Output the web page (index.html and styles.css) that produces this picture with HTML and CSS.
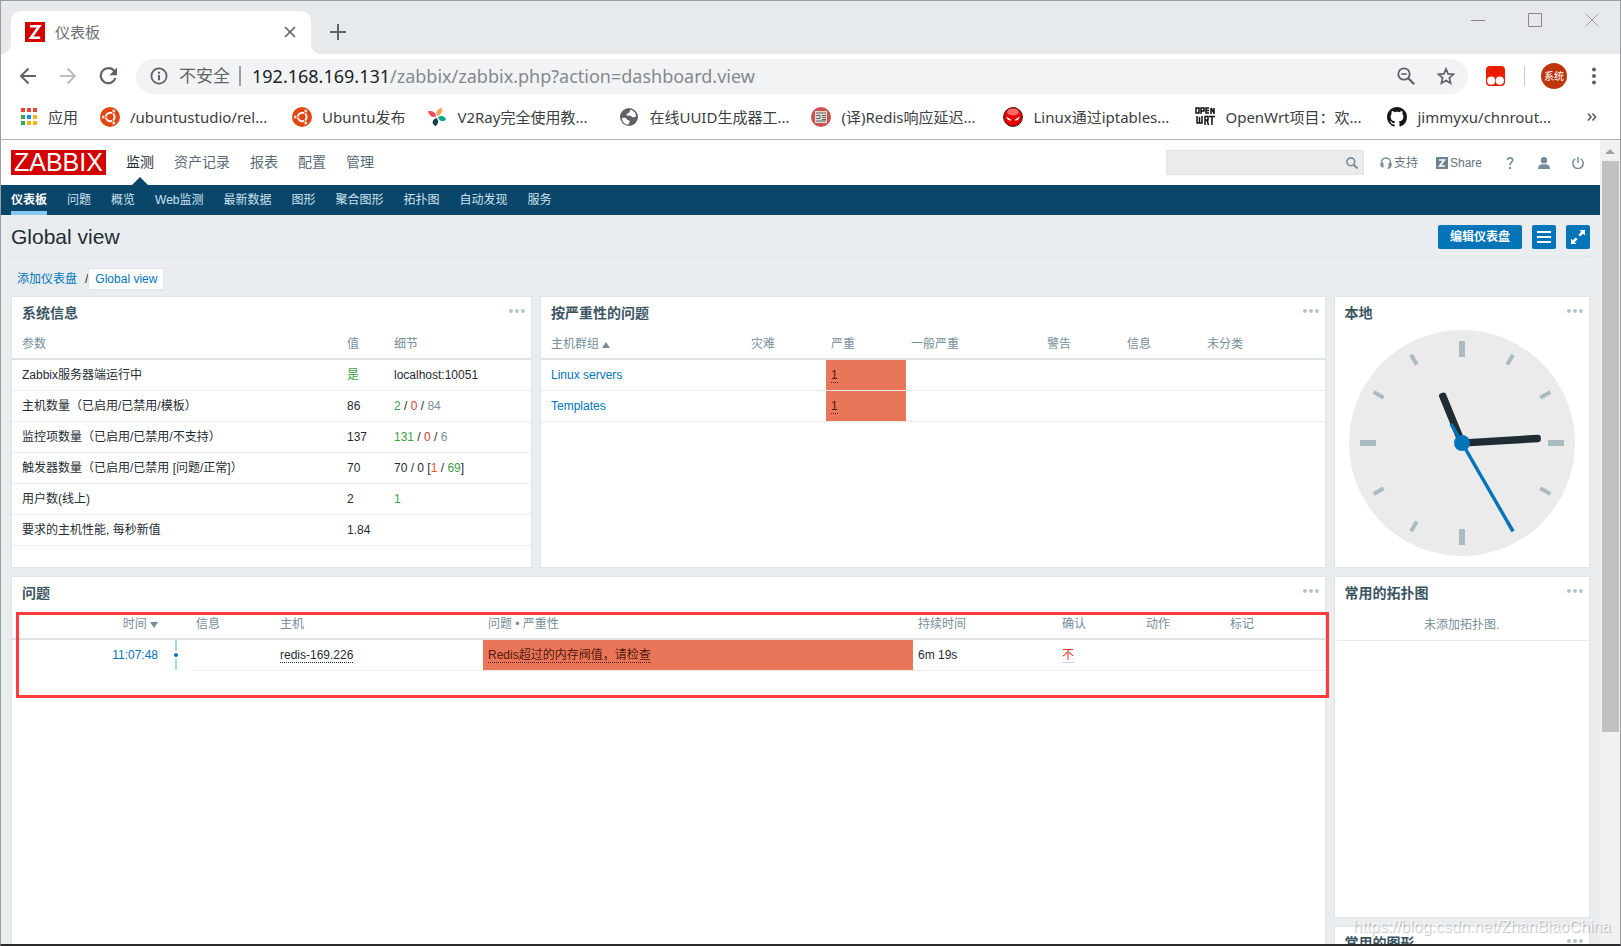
FILE: index.html
```html
<!DOCTYPE html>
<html lang="zh-CN">
<head>
<meta charset="utf-8">
<title>仪表板</title>
<link rel="stylesheet" href="styles.css">
</head>
<body>
<svg class="defs" aria-hidden="true">
  <symbol id="ubuntu" viewBox="0 0 20 20">
    <circle cx="10" cy="10" r="10" fill="#dd4814"/>
    <circle cx="10.300" cy="10" r="4.300" fill="none" stroke="#fff" stroke-width="2"/>
    <g stroke="#dd4814" stroke-width="1"><path d="M10.300 10H3M10.300 10L14 3.600M10.300 10L14 16.400"/></g>
    <circle cx="10.300" cy="10" r="2.600" fill="#dd4814"/>
    <g fill="#fff" stroke="#dd4814" stroke-width=".7"><circle cx="3.400" cy="10" r="1.700"/><circle cx="13.700" cy="4" r="1.700"/><circle cx="13.700" cy="16" r="1.700"/></g>
  </symbol>
  <symbol id="dots" viewBox="0 0 16 4"><circle cx="2" cy="2" r="2"/><circle cx="8" cy="2" r="2"/><circle cx="14" cy="2" r="2"/></symbol>
</svg>
<div class="window">
  <header class="tabstrip">
    <div class="tab">
      <svg class="i20" viewBox="0 0 20 20"><path fill="#d40000" d="M0 0h20v20H0z"/><path fill="none" stroke="#fff" stroke-width="2.600" d="M5 4.300h9.200L6 15.700h9.200"/></svg>
      <span class="tab-title">仪表板</span>
      <button class="plain" aria-label="关闭标签页"><svg class="i12" viewBox="0 0 12 12"><path stroke="#5f6368" stroke-width="1.700" d="M1 1l10 10M11 1L1 11"/></svg></button>
    </div>
    <button class="plain newtab" aria-label="新标签页"><svg class="i16" viewBox="0 0 16 16"><path stroke="#5f6368" stroke-width="2" d="M8 0v16M0 8h16"/></svg></button>
    <div class="wincontrols">
      <button class="plain" aria-label="最小化"><svg class="i14" viewBox="0 0 14 14"><path stroke="#888" d="M0 7.500h14"/></svg></button>
      <button class="plain" aria-label="最大化"><svg class="i14" viewBox="0 0 14 14"><path fill="none" stroke="#888" d="M.5.5h13v13H.5z"/></svg></button>
      <button class="plain" aria-label="关闭"><svg class="i14" viewBox="0 0 14 14"><path stroke="#999" d="M.5.5l13 13M13.500.5l-13 13"/></svg></button>
    </div>
  </header>

  <div class="toolbar">
    <button class="plain" aria-label="后退"><svg class="i18" viewBox="0 0 18 18"><path fill="none" stroke="#5f6368" stroke-width="2" d="M17 9H2M9.500 1.500L2 9l7.500 7.500"/></svg></button>
    <button class="plain" aria-label="前进"><svg class="i18" viewBox="0 0 18 18"><path fill="none" stroke="#babcbe" stroke-width="2" d="M1 9h15M8.500 1.500L16 9l-7.500 7.500"/></svg></button>
    <button class="plain" aria-label="刷新"><svg class="i18" viewBox="0 0 18 18"><path fill="none" stroke="#5f6368" stroke-width="2.200" d="M15.500 4.500A7.500 7.500 0 1 0 16.400 11"/><path fill="#5f6368" d="M18 .5v7.700h-7.700z"/></svg></button>
    <div class="omnibox">
      <svg class="i18" viewBox="0 0 18 18"><circle cx="9" cy="9" r="7.600" fill="none" stroke="#5f6368" stroke-width="1.800"/><path fill="#5f6368" d="M8 8h2v5.200H8zM8 4.800h2v2H8z"/></svg>
      <span class="insecure">不安全</span>
      <span class="url"><b>192.168.169.131</b>/zabbix/zabbix.php?action=dashboard.view</span>
      <button class="plain" aria-label="缩放"><svg class="i18" viewBox="0 0 18 18"><circle cx="7" cy="7" r="5.700" fill="none" stroke="#5f6368" stroke-width="1.800"/><path fill="none" stroke="#5f6368" stroke-width="1.600" d="M4.300 7h5.400"/><path stroke="#5f6368" stroke-width="2.200" d="M11.200 11.200l6 6"/></svg></button>
      <button class="plain" aria-label="为此网页添加书签"><svg class="i18" viewBox="0 0 18 18"><path fill="none" stroke="#5f6368" stroke-width="1.700" d="M9 1.900l2.100 5 5.400.4-4.100 3.600 1.200 5.300L9 13.400l-4.600 2.800 1.200-5.300L1.500 7.300l5.400-.4z"/></svg></button>
    </div>
    <svg class="i20" viewBox="0 0 20 20"><rect width="19" height="20" rx="4" fill="#eb1d00"/><circle cx="5.200" cy="14.700" r="4.100" fill="#fff"/><circle cx="13.800" cy="14.700" r="4.100" fill="#fff"/></svg>
    <i class="divider"></i>
    <button class="plain avatar">系统</button>
    <button class="plain" aria-label="菜单"><svg class="i18" viewBox="0 0 18 18" fill="#5f6368"><circle cx="9" cy="2.500" r="2"/><circle cx="9" cy="9" r="2"/><circle cx="9" cy="15.500" r="2"/></svg></button>
  </div>

  <nav class="bookmarks">
    <a href="#"><svg class="i18" viewBox="0 0 18 18"><path fill="#ea4335" d="M1 0h4v4H1zM7 0h4v4H7zM13 0h4v4h-4z"/><path fill="#34a853" d="M1 7h4v4H1zM1 13h4v4H1z"/><path fill="#1a8cff" d="M7 7h4v4H7z"/><path fill="#fbb300" d="M13 7h4v4h-4zM7 13h4v4H7zM13 13h4v4h-4z"/></svg>应用</a>
    <a href="#" class="long"><svg class="i20"><use href="#ubuntu"/></svg>/ubuntustudio/rel...</a>
    <a href="#"><svg class="i20"><use href="#ubuntu"/></svg>Ubuntu发布</a>
    <a href="#" class="long"><svg class="i20" viewBox="0 0 20 20"><path fill="#f9a55a" d="M10 9C8 5 11 1 15 1c1.500 3-1 7-5 8z"/><path fill="#f04c5b" d="M9 9.500C6 11 2 9 1 4.500 5 3 9 5.500 9 9.500z"/><path fill="#0ba58b" d="M11 10c3-2 6.500-1 8 2-1.500 3.500-7 3-8-2z"/><path fill="#15414d" d="M9.500 11c2.500 2.500 2 6-1 8-4-1.500-4-6.500 1-8z"/></svg>V2Ray完全使用教...</a>
    <a href="#" class="long"><svg class="i20" viewBox="0 0 20 20"><circle cx="10" cy="10" r="9" fill="#5f6368"/><path fill="#fff" d="M3 11c2-.5 4-.2 5 1.300 1 1.200 3 .8 2.600 2.700-.3 1.300-1 1.700-1.300 2.800C5.500 17.500 3 14.500 3 11zM11.500 2.800c3 .6 5.500 3 5.500 6.400-1.500 1.400-3.500 1-4.600.2-1.200-.8-3.900.2-4.700-1.200-.6-1.300 1-2 2-2.300 1.400-.4.600-2 1.800-3.100z"/></svg>在线UUID生成器工...</a>
    <a href="#" class="long"><svg class="i20" viewBox="0 0 20 20"><circle cx="10" cy="10" r="10" fill="#cb5252"/><path fill="#e3dccb" d="M4 4h12v12H4z"/><path fill="none" stroke="#596273" d="M5 6h10M5 8.500h4v3H5M11 8.500h4M11 10.500h4M11 12.500h4M5 14h10"/></svg>(译)Redis响应延迟...</a>
    <a href="#" class="long"><svg class="i20" viewBox="0 0 20 20"><circle cx="10" cy="10" r="9.400" fill="#e80000" stroke="#301010"/><ellipse cx="10" cy="5" rx="6" ry="3.500" fill="#f66"/><path fill="#fff" d="M3.500 9.500l5 3.500c-2 1.500-4.500 0-5-3.500zM16.500 9.500l-5 3.500c2 1.500 4.500 0 5-3.500z"/></svg>Linux通过iptables...</a>
    <a href="#" class="long"><svg class="i20" viewBox="0 0 20 20"><g fill="none" stroke="#111" stroke-width="1.500"><path d="M1 1h3v5H1zM6 7V1h3v3H6M14 1h-3v5h3M11 3.500h3M16 7V1M19 7V1M16 1l3 5M2 9v7h5V9M4.500 10v6M10 18V9.500h3v3.500h-3M12 13l1.500 5M14 9.500h6M17 9.500V18"/></g></svg>OpenWrt项目：欢...</a>
    <a href="#" class="long"><svg class="i20" viewBox="0 0 16 16"><path fill="#161616" d="M8 0C3.580 0 0 3.580 0 8c0 3.540 2.290 6.530 5.470 7.590.4.070.55-.17.55-.38 0-.19-.01-.82-.01-1.490-2.010.37-2.530-.49-2.690-.94-.09-.23-.48-.94-.82-1.130-.28-.15-.68-.52-.01-.53.63-.01 1.080.58 1.230.82.72 1.210 1.870.87 2.330.66.070-.52.28-.87.51-1.070-1.780-.2-3.640-.89-3.640-3.950 0-.87.31-1.590.82-2.150-.08-.2-.36-1.020.08-2.120 0 0 .67-.21 2.200.82.64-.18 1.320-.27 2-.27s1.360.09 2 .27c1.530-1.040 2.200-.82 2.200-.82.44 1.100.16 1.920.08 2.120.51.56.82 1.270.82 2.150 0 3.070-1.870 3.750-3.650 3.950.29.25.54.73.54 1.480 0 1.070-.01 1.930-.01 2.200 0 .21.15.46.55.38A8.010 8.010 0 0 0 16 8c0-4.420-3.580-8-8-8z"/></svg>jimmyxu/chnrout...</a>
    <button class="plain more" aria-label="更多书签"><svg class="i10" viewBox="0 0 10 10"><path fill="none" stroke="#5f6368" stroke-width="1.700" d="M1 1.500L4 5 1 8.500M5.500 1.500l3 3.500-3 3.500"/></svg></button>
  </nav>

  <div class="viewport">
    <div class="page">
      <div class="topbar">
        <a href="#" class="logo">ZABBIX</a>
        <nav class="mainmenu"><a href="#" class="on">监测</a><a href="#">资产记录</a><a href="#">报表</a><a href="#">配置</a><a href="#">管理</a></nav>
        <form class="search"><input type="text" aria-label="搜索"><button type="button" class="plain" aria-label="搜索"><svg class="i12" viewBox="0 0 12 12"><circle cx="4.800" cy="4.800" r="3.900" fill="none" stroke="#768d99" stroke-width="1.600"/><path stroke="#768d99" stroke-width="2" d="M7.700 7.700l3.800 3.800"/></svg></button></form>
        <div class="userlinks">
          <a href="#"><svg class="i12" viewBox="0 0 12 12"><path fill="none" stroke="#768d99" stroke-width="1.500" d="M1.500 7V5.500a4.500 4.500 0 0 1 9 0V9c0 1.500-1 2-3 2.200"/><path fill="#768d99" d="M.5 6H3.500v4.500H2L.5 9zM8.500 6h3v3L10 10.500H8.500z"/></svg>支持</a>
          <a href="#"><svg class="i12" viewBox="0 0 12 12"><path fill="#6d838f" d="M0 0h12v12H0z"/><path fill="none" stroke="#fff" stroke-width="1.700" d="M3 3h5.300L3.700 9H9"/></svg>Share</a>
          <a href="#" class="ico" aria-label="帮助"><svg class="i12" viewBox="0 0 12 12"><path fill="none" stroke="#768d99" stroke-width="1.700" d="M3.500 3.200C3.700 1.500 4.800.9 6 .9c1.500 0 2.600.9 2.600 2.300C8.600 5.300 6 5.300 6 8.300"/><path fill="#768d99" d="M5 10h2v2H5z"/></svg></a>
          <a href="#" class="ico" aria-label="用户"><svg class="i12" viewBox="0 0 12 12" fill="#768d99"><circle cx="6" cy="3.200" r="3.200"/><path d="M0 12c0-3 1.500-4.500 4-4.700h4c2.500.2 4 1.700 4 4.700z"/></svg></a>
          <a href="#" class="ico" aria-label="退出"><svg class="i12" viewBox="0 0 12 12" fill="none" stroke="#768d99" stroke-width="1.500"><path d="M3.200 1.900a5.200 5.200 0 1 0 5.600 0M6 0v6"/></svg></a>
        </div>
      </div>
      <nav class="submenu"><a href="#" class="on">仪表板</a><a href="#">问题</a><a href="#">概览</a><a href="#">Web监测</a><a href="#">最新数据</a><a href="#">图形</a><a href="#">聚合图形</a><a href="#">拓扑图</a><a href="#">自动发现</a><a href="#">服务</a></nav>

      <main class="content">
        <div class="titlebar">
          <h1>Global view</h1>
          <button class="btn">编辑仪表盘</button>
          <button class="btn sq" aria-label="动作"><svg class="i14" viewBox="0 0 14 14"><path stroke="#fff" stroke-width="2" d="M0 2h14M0 7h14M0 12h14"/></svg></button>
          <button class="btn sq" aria-label="全屏"><svg class="i14" viewBox="0 0 14 14"><path fill="#fff" d="M8.500 0H14v5.500L12.200 3.700 9.300 6.600 7.400 4.700l2.900-2.900zM5.500 14H0V8.500l1.800 1.800 2.900-2.900 1.900 1.900-2.900 2.900z"/></svg></button>
        </div>
        <div class="crumbs"><a href="#">添加仪表盘</a><span>/</span><a href="#" class="cur">Global view</a></div>

        <div class="grid">
          <section class="widget w4">
            <div class="whead"><h4>系统信息</h4><button class="plain" aria-label="更多"><svg class="dots"><use href="#dots"/></svg></button></div>
            <table class="sys">
              <colgroup><col class="s1"><col class="s2"><col></colgroup>
              <thead><tr><th>参数</th><th>值</th><th>细节</th></tr></thead>
              <tbody>
                <tr><td>Zabbix服务器端运行中</td><td class="green">是</td><td>localhost:10051</td></tr>
                <tr><td>主机数量（已启用/已禁用/模板）</td><td>86</td><td><span class="green">2</span> / <span class="red">0</span> / <span class="grey">84</span></td></tr>
                <tr><td>监控项数量（已启用/已禁用/不支持）</td><td>137</td><td><span class="green">131</span> / <span class="red">0</span> / <span class="grey">6</span></td></tr>
                <tr><td>触发器数量（已启用/已禁用 [问题/正常]）</td><td>70</td><td>70 / 0 [<span class="orange">1</span> / <span class="green">69</span>]</td></tr>
                <tr><td>用户数(线上)</td><td>2</td><td class="green">1</td></tr>
                <tr><td>要求的主机性能, 每秒新值</td><td>1.84</td><td></td></tr>
              </tbody>
            </table>
          </section>

          <section class="widget w6">
            <div class="whead"><h4>按严重性的问题</h4><button class="plain" aria-label="更多"><svg class="dots"><use href="#dots"/></svg></button></div>
            <table class="sev">
              <colgroup><col class="v1"><col class="v2"><col class="v2"><col class="v3"><col class="v2"><col class="v2"><col></colgroup>
              <thead><tr><th>主机群组 <i class="up"></i></th><th>灾难</th><th>严重</th><th>一般严重</th><th>警告</th><th>信息</th><th>未分类</th></tr></thead>
              <tbody>
                <tr><td><a href="#">Linux servers</a></td><td></td><td class="high"><a href="#" class="dot">1</a></td><td></td><td></td><td></td><td></td></tr>
                <tr><td><a href="#">Templates</a></td><td></td><td class="high"><a href="#" class="dot">1</a></td><td></td><td></td><td></td><td></td></tr>
              </tbody>
            </table>
          </section>

          <section class="widget w2">
            <div class="whead"><h4>本地</h4><button class="plain" aria-label="更多"><svg class="dots"><use href="#dots"/></svg></button></div>
            <svg class="clock" viewBox="-113 -113 226 226">
              <circle r="113" fill="#ebebeb"/>
              <g stroke="#acbbc2" stroke-width="6"><path d="M0-102v16M0 102V86M-102 0h16M102 0H86"/></g>
              <g stroke="#acbbc2" stroke-width="4">
                <path d="M0-102v11.500" transform="rotate(30)"/><path d="M0-102v11.500" transform="rotate(60)"/><path d="M0-102v11.500" transform="rotate(120)"/><path d="M0-102v11.500" transform="rotate(150)"/><path d="M0-102v11.500" transform="rotate(210)"/><path d="M0-102v11.500" transform="rotate(240)"/><path d="M0-102v11.500" transform="rotate(300)"/><path d="M0-102v11.500" transform="rotate(330)"/>
              </g>
              <rect x="-3.700" y="-54" width="7.400" height="54" rx="3" fill="#1f2c33" transform="rotate(-22.200)"/>
              <rect x="-3.700" y="-79" width="7.400" height="79" rx="3" fill="#1f2c33" transform="rotate(86.600)"/>
              <path stroke="#0275b8" stroke-width="3.400" d="M0-102V22" transform="rotate(150)"/>
              <circle r="8" fill="#0275b8"/>
            </svg>
          </section>

          <section class="widget w10">
            <div class="whead"><h4>问题</h4><button class="plain" aria-label="更多"><svg class="dots"><use href="#dots"/></svg></button></div>
            <table class="prob">
              <colgroup><col class="p1"><col class="p2"><col class="p3"><col class="p4"><col class="p5"><col class="p6"><col class="p3"><col class="p3"><col></colgroup>
              <thead><tr><th class="right">时间 <i class="down"></i></th><th></th><th>信息</th><th>主机</th><th>问题 • 严重性</th><th>持续时间</th><th>确认</th><th>动作</th><th>标记</th></tr></thead>
              <tbody><tr><td class="right nb"><a href="#">11:07:48</a></td><td class="nb line"><i></i></td><td></td><td><a href="#" class="dot">redis-169.226</a></td><td class="high"><a href="#" class="dot">Redis超过的内存阀值，请检查</a></td><td>6m 19s</td><td><a href="#" class="ack">不</a></td><td></td><td></td></tr></tbody>
            </table>
            <div class="marker"></div>
          </section>

          <section class="widget w2">
            <div class="whead"><h4>常用的拓扑图</h4><button class="plain" aria-label="更多"><svg class="dots"><use href="#dots"/></svg></button></div>
            <p class="empty">未添加拓扑图.</p>
          </section>

          <section class="widget w2">
            <div class="whead"><h4>常用的图形</h4><button class="plain" aria-label="更多"><svg class="dots"><use href="#dots"/></svg></button></div>
          </section>
        </div>
      </main>
    </div>
    <div class="scrollbar"><i class="arrow"></i><i class="thumb"></i></div>
    <div class="watermark">https://blog.csdn.net/ZhanBiaoChina</div>
  </div>
</div>
</body>
</html>
```
FILE: styles.css
```css
* { box-sizing: border-box; }
body { margin: 0; font: 12px/14px "Liberation Sans", "Noto Sans CJK SC", sans-serif; color: #1f2c33; }
a { color: #0275b8; text-decoration: none; }
svg { display: block; flex: none; }
.defs { position: absolute; width: 0; height: 0; }
.i10 { width: 10px; height: 10px; }
.i12 { width: 12px; height: 12px; }
.i14 { width: 14px; height: 14px; }
.i16 { width: 16px; height: 16px; }
.i18 { width: 18px; height: 18px; }
.i20 { width: 20px; height: 20px; }
.plain { flex: none; padding: 0; border: 0; background: none; font: inherit; color: inherit; }

.window { display: flex; flex-direction: column; height: 100vh; overflow: hidden; border: 1px solid #999da1; border-bottom: 2px solid #2b2b2d; background: #fff; }

/* browser chrome */
.tabstrip { display: flex; align-items: flex-end; height: 53px; flex: none; padding-left: 10px; background: #e6eaed; }
.tab { position: relative; display: flex; align-items: center; gap: 10px; width: 300px; height: 43px; padding: 0 15px 2px 14px; background: #fff; border-radius: 10px 10px 0 0; }
.tab::before, .tab::after { content: ""; position: absolute; bottom: 0; width: 10px; height: 10px; }
.tab::before { right: 100%; background: radial-gradient(circle at 0 0, #e6eaed 10px, #fff 10px); }
.tab::after { left: 100%; background: radial-gradient(circle at 100% 0, #e6eaed 10px, #fff 10px); }
.tab-title { flex: 1; font: 15px/20px "Noto Sans CJK SC", sans-serif; color: #6b6f74; }
.newtab { margin: 0 0 14px 19px; }
.wincontrols { display: flex; gap: 43px; margin-left: auto; align-self: flex-start; padding: 12px 21px 0 0; }
.toolbar { display: flex; align-items: center; height: 46px; flex: none; padding: 0 17px 2px 18px; gap: 22px; color: #5f6368; }
.omnibox { display: flex; flex: 1; align-items: center; gap: 11px; height: 35px; margin: 0 -4px 0 -3px; padding: 0 13px 0 14px; border-radius: 18px; background: #f1f3f4; font: 17px/24px "Noto Sans", "Noto Sans CJK SC", sans-serif; }
.insecure { padding-right: 9px; border-right: 2px solid #9a9da1; line-height: 20px; }
.url { flex: 1; font-size: 18px; color: #85898e; }
.url b { font-weight: 400; color: #202124; }
.omnibox button + button { margin-left: 11px; }
.divider { width: 1px; height: 20px; margin-left: -4px; background: #c8cacd; }
.avatar { width: 26px; height: 26px; margin: 0 -4px 0 -6px; border-radius: 50%; background: #c0360c; color: #fff; font: 10px/26px "Noto Sans CJK SC", sans-serif; }
.bookmarks { display: flex; align-items: center; gap: 22px; height: 40px; flex: none; padding: 0 23px 5px 19px; border-bottom: 1px solid #b0b2b4; font: 15px/20px "Noto Sans", "Noto Sans CJK SC", sans-serif; }
.bookmarks a { display: flex; align-items: center; gap: 10px; color: #3c4043; white-space: nowrap; }
.bookmarks .long { width: 170px; }
.more { margin-left: auto; }

/* application shell */
.viewport { position: relative; display: flex; flex: 1; min-height: 0; }
.page { flex: 1; min-width: 0; overflow: hidden; background: #e9edf0; }
.scrollbar { width: 20px; flex: none; background: #f1f1f1; }
.arrow { display: block; width: 0; margin: 9px auto 7px; border: 5px solid transparent; border-top: 0; border-bottom-color: #a3a3a3; }
.thumb { display: block; width: 17px; height: 71%; margin: 0 auto; background: #c1c1c1; }
.topbar { display: flex; align-items: center; height: 45px; padding: 0 16px 0 10px; background: #fff; }
.logo { padding: 0 3px; background: #d40000; color: #fff; font-size: 25px; line-height: 25px; }
.mainmenu { display: flex; gap: 20px; flex: 1; align-self: stretch; margin-left: 20px; font-size: 14px; line-height: 34px; }
.mainmenu a { position: relative; padding-top: 5px; color: #5a6b76; }
.mainmenu .on { color: #1f2c33; }
.mainmenu .on::after { content: ""; position: absolute; bottom: 0; left: 50%; margin-left: -8px; border: 8px solid transparent; border-top: 0; border-bottom-color: #0a466a; }
.search { display: flex; align-items: center; width: 198px; height: 25px; border: 1px solid #dfe4e7; background: #ebebeb; padding-right: 5px; }
.search input { flex: 1; min-width: 0; height: 100%; border: 0; background: none; }
.userlinks { display: flex; align-items: center; gap: 18px; padding-left: 16px; }
.userlinks a { display: flex; align-items: center; gap: 2px; color: #5f7480; }
.userlinks .ico { margin-left: 4px; }
.submenu { display: flex; gap: 20px; height: 30px; padding: 0 10px; background: #0a466a; line-height: 30px; }
.submenu a { color: #cde3f0; }
.submenu .on { color: #fff; font-weight: 700; border-bottom: 4px solid #87c8f5; }
.content { padding: 0 10px; }
.titlebar { display: flex; align-items: center; gap: 10px; height: 42px; padding: 5px 0 3px; border-bottom: 1px solid #dfe4e7; }
h1 { flex: 1; margin: 0; font-size: 21px; line-height: 24px; font-weight: 400; }
.btn { height: 24px; padding: 0 12px; border: 0; border-radius: 2px; background: #0275b8; color: #fff; font: 700 12px/24px "Liberation Sans", "Noto Sans CJK SC", sans-serif; }
.sq { width: 24px; padding: 0 5px; }
.crumbs { display: flex; align-items: center; height: 39px; padding: 5px 0 0 6px; }
.crumbs span { margin-left: 8px; }
.crumbs .cur { padding: 3px 6px; border: 1px solid #dfe4e7; background: #fff; }

/* dashboard */
.grid { display: grid; grid-template-columns: repeat(12, 1fr); grid-template-rows: minmax(272px, auto) minmax(342px, auto); grid-auto-rows: minmax(272px, auto); gap: 8px; }
.widget { position: relative; min-width: 0; border: 1px solid #dfe4e7; background: #fff; }
.w2 { grid-column: span 2; }
.w4 { grid-column: span 4; }
.w6 { grid-column: span 6; }
.w10 { grid-column: span 10; grid-row: span 2; }
.whead { display: flex; align-items: flex-start; justify-content: space-between; height: 32px; padding: 8px 6px 0 10px; }
h4 { margin: 0; font-size: 14px; line-height: 16px; color: #3c5563; }
.dots { width: 16px; height: 4px; margin-top: 4px; fill: #b8c4ca; }
table { width: 100%; border-collapse: separate; border-spacing: 0; table-layout: fixed; }
th, td { height: 31px; padding: 0 5px; border-bottom: 1px solid #e9edf0; text-align: left; font-weight: 400; vertical-align: middle; white-space: nowrap; }
th { border-bottom: 2px solid #dce2e5; color: #768d99; }
th:first-child, td:first-child { padding-left: 10px; }
.s1 { width: 330px; } .s2 { width: 47px; }
.v1 { width: 205px; } .v2 { width: 80px; } .v3 { width: 136px; }
.p1 { width: 151px; } .p2 { width: 28px; } .p3 { width: 84px; } .p4 { width: 208px; } .p5 { width: 430px; } .p6 { width: 144px; }
.right { text-align: right; }
.nb { border-bottom: 0; }
.green { color: #429e47; }
.red { color: #e33734; }
.grey { color: #768d99; }
.orange { color: #f24f1d; }
.high { background: #e97659; background-clip: padding-box; }
.dot { color: #1f2c33; border-bottom: 1px dotted #1f2c33; }
.high .dot { color: #52190b; border-color: #52190b; }
.ack { color: #e33734; border-bottom: 1px solid #ccd5d9; }
.up, .down { display: inline-block; border: 4px solid transparent; }
.up { border-top: 0; border-bottom: 6px solid #768d99; }
.down { border-bottom: 0; border-top: 6px solid #768d99; }
.prob .nb { border-bottom: 1px solid #fff; }
.prob .line { padding: 0; background: linear-gradient(#a8d5ee, #a8d5ee) 12px 0 / 2px 100% no-repeat; }
.line i { display: block; width: 4px; height: 4px; margin-left: 11px; border-radius: 50%; background: #0275b8; box-shadow: 0 0 0 2px #fff; }
.clock { width: 226px; max-width: 100%; margin: 1px auto 0; }
.empty { margin: 0; padding: 9px 0 8px; border-bottom: 1px solid #e9edf0; text-align: center; color: #768d99; }
.marker { position: absolute; top: 35px; left: 4px; right: -4px; height: 86px; border: 3px solid #ff3b3b; }
.watermark { position: absolute; right: 9px; bottom: 8px; font-size: 16px; line-height: 18px; color: rgba(255, 255, 255, .75); text-shadow: 1px 1px 1px rgba(0, 0, 0, .25); }
```
